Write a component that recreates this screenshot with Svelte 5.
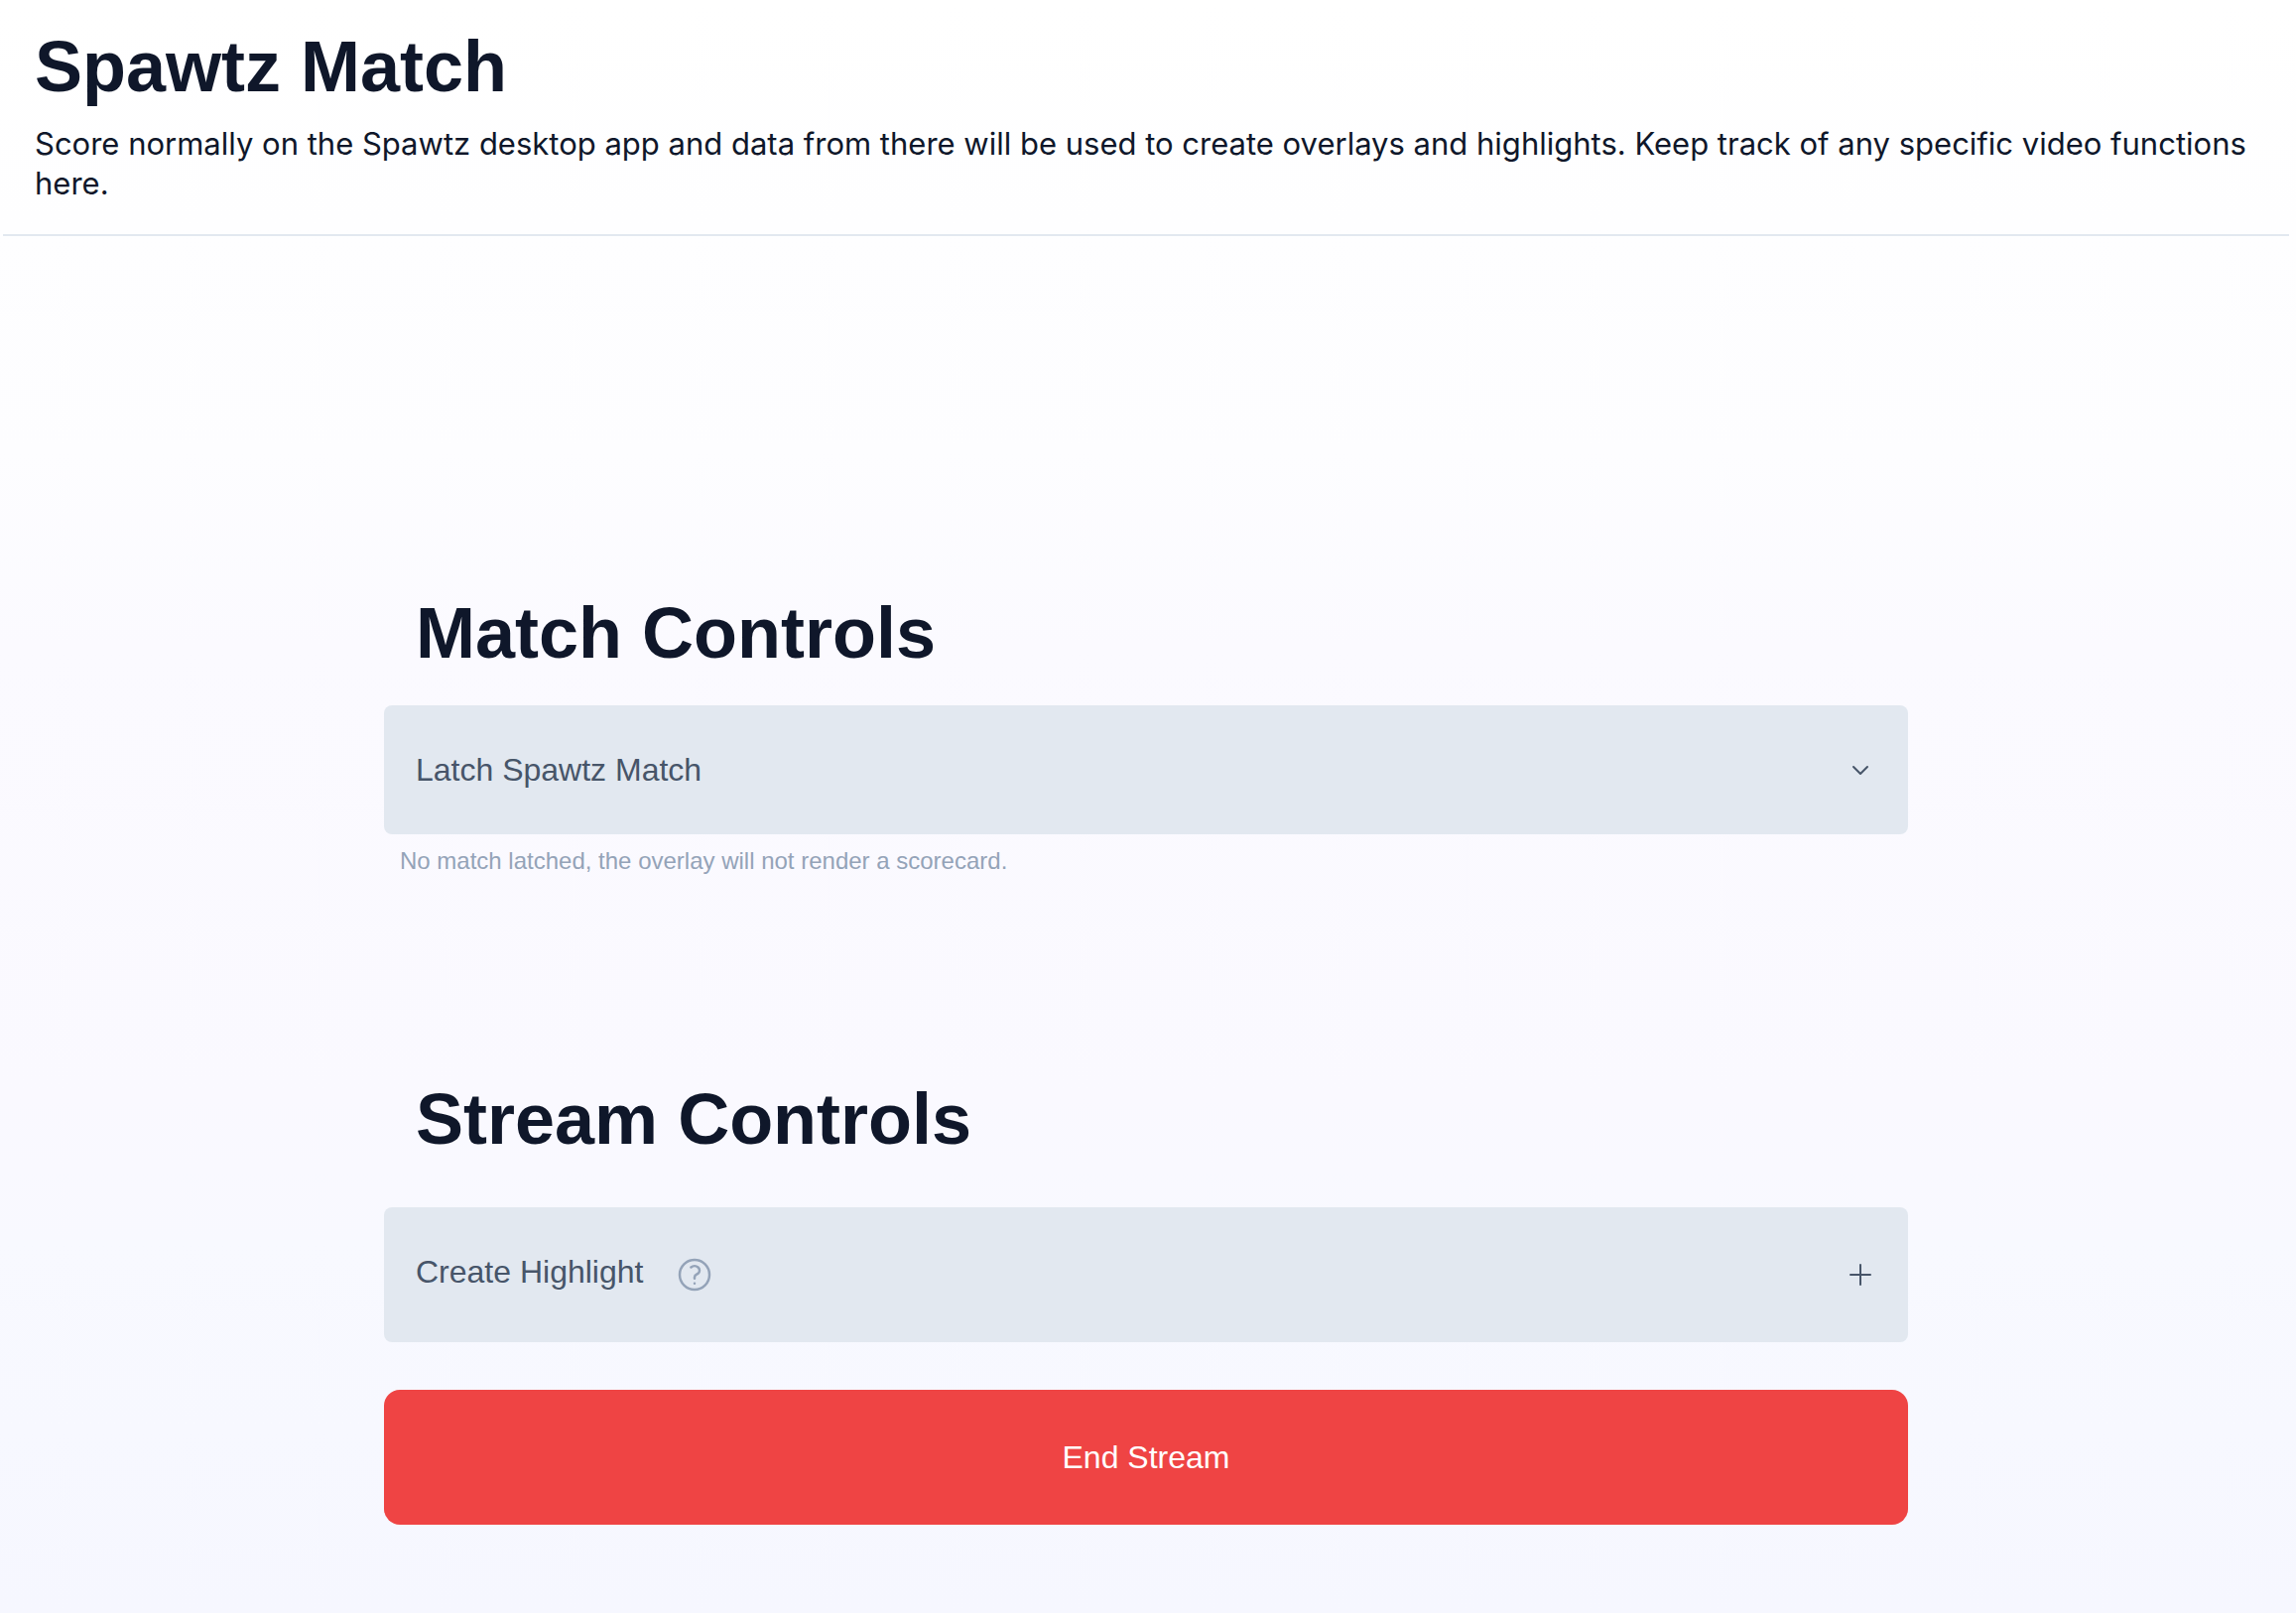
<script>
  let latchOpen = $state(false);
</script>

<div class="page">
  <header>
    <h1>Spawtz Match</h1>
    <p>
      Score normally on the Spawtz desktop app and data from there will be used to create overlays
      and highlights. Keep track of any specific video functions here.
    </p>
  </header>

  <main>
    <section>
      <h2>Match Controls</h2>
      <button
        class="panel latch"
        type="button"
        aria-expanded={latchOpen}
        aria-describedby="latch-note"
        onclick={() => (latchOpen = !latchOpen)}
      >
        <span>Latch Spawtz Match</span>
        <svg class="action" viewBox="0 0 24 24" aria-hidden="true">
          <path d="M17.25 9.75 12 15 6.75 9.75" />
        </svg>
      </button>
      <p class="note" id="latch-note">No match latched, the overlay will not render a scorecard.</p>
    </section>

    <section class="stream">
      <h2>Stream Controls</h2>
      <button class="panel tall" type="button">
        <span class="label">
          <span>Create Highlight</span>
          <svg class="help" viewBox="0 0 24 24" aria-hidden="true">
            <path
              d="M9.879 7.519c1.171-1.025 3.071-1.025 4.242 0 1.172 1.025 1.172 2.687 0 3.712-.203.179-.43.326-.67.442-.745.361-1.45.999-1.45 1.827v.75M21 12a9 9 0 1 1-18 0 9 9 0 0 1 18 0Zm-9 5.25h.008v.008H12v-.008Z"
            />
          </svg>
        </span>
        <svg class="action" viewBox="0 0 24 24" aria-hidden="true">
          <path d="M12 4.5v15m7.5-7.5h-15" />
        </svg>
      </button>
      <button class="tall end" type="button">End Stream</button>
    </section>
  </main>
</div>

<style>
  .page {
    box-sizing: border-box;
    min-height: 100vh;
    padding: 0 7px 64px 3px;
    background: linear-gradient(#ffffff, #fdfdff 28%, #fbfaff 40%, #faf9ff 68%, #f8f9ff 77%, #f6f7ff);
    color: #0f172a;
    font-family: "Liberation Sans", Helvetica, Arial, sans-serif;
    font-size: 32px;
  }

  header {
    display: flex;
    flex-direction: column;
    gap: 18px;
    padding: 27px 32px 31px;
    border-bottom: 2px solid #e2e8f0;
  }

  h1,
  h2,
  p {
    margin: 0;
  }

  h1,
  h2 {
    font-size: 72px;
    line-height: 80px;
    font-weight: 700;
  }

  header p {
    font-family: Inter, sans-serif;
    font-size: 31px;
    line-height: 40px;
  }

  main {
    display: flex;
    flex-direction: column;
    gap: 204px;
    width: 66.6667%;
    margin: 0 auto;
    padding-top: 360px;
  }

  section {
    display: flex;
    flex-direction: column;
  }

  h2 {
    padding: 0 32px;
    margin-bottom: 33px;
  }

  .stream h2 {
    margin-bottom: 49px;
  }

  button {
    border: 0;
    font: inherit;
    cursor: pointer;
  }

  .panel {
    display: flex;
    align-items: center;
    justify-content: space-between;
    padding: 0 32px;
    border-radius: 8px;
    background: #e2e8f0;
    color: #475569;
    text-align: left;
  }

  .latch {
    height: 130px;
  }

  .tall {
    height: 136px;
  }

  .note {
    margin-top: 11px;
    padding: 0 16px;
    color: #94a3b8;
    font-size: 24px;
    line-height: 32px;
  }

  .label {
    display: flex;
    align-items: flex-start;
    gap: 32px;
    line-height: 34px;
  }

  svg {
    fill: none;
    stroke: currentColor;
    stroke-width: 1.5;
    stroke-linecap: round;
    stroke-linejoin: round;
  }

  .action {
    width: 32px;
    height: 32px;
  }

  .help {
    width: 40px;
    height: 40px;
    color: #94a3b8;
  }

  .end {
    margin-top: 48px;
    border-radius: 16px;
    background: #ef4444;
    color: #ffffff;
  }
</style>
